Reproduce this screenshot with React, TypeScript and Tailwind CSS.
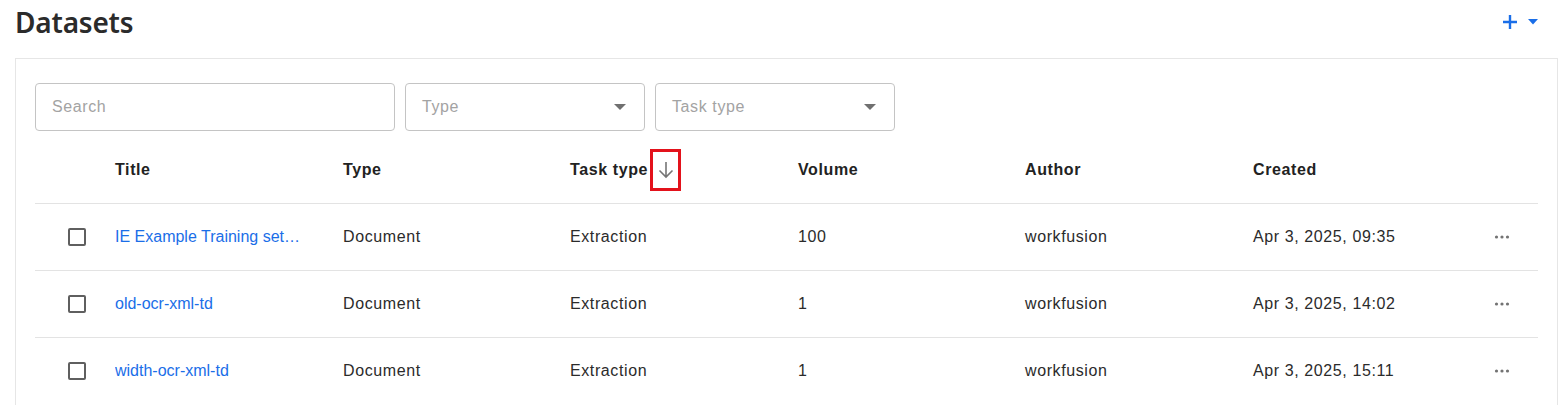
import React from "react";

type Dataset = {
  id: number;
  title: string;
  type: string;
  taskType: string;
  volume: number;
  author: string;
  created: string;
};

const datasets: Dataset[] = [
  {
    id: 1,
    title: "IE Example Training set_copy",
    type: "Document",
    taskType: "Extraction",
    volume: 100,
    author: "workfusion",
    created: "Apr 3, 2025, 09:35",
  },
  {
    id: 2,
    title: "old-ocr-xml-td",
    type: "Document",
    taskType: "Extraction",
    volume: 1,
    author: "workfusion",
    created: "Apr 3, 2025, 14:02",
  },
  {
    id: 3,
    title: "width-ocr-xml-td",
    type: "Document",
    taskType: "Extraction",
    volume: 1,
    author: "workfusion",
    created: "Apr 3, 2025, 15:11",
  },
];

const cols =
  "grid grid-cols-[80px_228px_227px_228px_227px_228px_227px_58px] items-center";

const Caret = ({ className }: { className?: string }) => (
  <svg width="12" height="6" viewBox="0 0 12 6" className={className}>
    <path d="M0 0h12L6 6z" fill="currentColor" />
  </svg>
);

const SelectBox = ({ label }: { label: string }) => (
  <div className="w-[240px] h-[48px] border border-[#c4c4c4] rounded-[4px] flex items-center justify-between pl-[16px] pr-[18px] text-[16px] text-[#a3a3a3]">
    <span>{label}</span>
    <Caret className="text-[#707070]" />
  </div>
);

const SortArrow = () => (
  <span className="ml-[2px] w-[31px] h-[42px] border-[3px] border-[#e3121b] flex items-center justify-center">
    <svg width="16" height="18" viewBox="0 0 16 18" fill="none">
      <path
        d="M8 1v15M1.5 9.5 8 16l6.5-6.5"
        stroke="#757575"
        strokeWidth="1.6"
      />
    </svg>
  </span>
);

const Dots = () => (
  <svg width="16" height="4" viewBox="0 0 16 4">
    <circle cx="2.5" cy="2" r="1.6" fill="#737373" />
    <circle cx="8" cy="2" r="1.6" fill="#737373" />
    <circle cx="13.5" cy="2" r="1.6" fill="#737373" />
  </svg>
);

const App = () => {
  return (
    <div className="bg-white w-[1567px] h-[405px] overflow-hidden font-['Liberation_Sans',Arial,sans-serif] tracking-[0.6px]">
      <div className="flex items-center justify-between pl-[15px] pr-[29px] h-[44px]">
        <h1 className="font-['Noto_Sans',sans-serif] font-semibold text-[28px] leading-none text-[#2b2b2b] tracking-[-0.2px]">
          Datasets
        </h1>
        <div className="flex items-center gap-[10px] text-[#1a6ee8]">
          <svg width="16" height="16" viewBox="0 0 16 16">
            <path d="M8 1v14M1 8h14" stroke="currentColor" strokeWidth="2.4" />
          </svg>
          <svg width="10" height="6" viewBox="0 0 10 6">
            <path d="M0 0h10L5 5.5z" fill="currentColor" />
          </svg>
        </div>
      </div>

      <div className="mt-[14px] ml-[15px] mr-[9px] border border-[#e6e6e6] pt-[24px] pl-[19px] pr-[19px]">
        <div className="flex gap-[10px]">
          <input
            placeholder="Search"
            className="w-[360px] h-[48px] border border-[#c4c4c4] rounded-[4px] px-[16px] text-[16px] outline-none placeholder:text-[#a3a3a3]"
          />
          <SelectBox label="Type" />
          <SelectBox label="Task type" />
        </div>

        <div className="mt-[6px]">
          <div
            className={`${cols} h-[67px] border-b border-[#e3e3e3] text-[16px] font-bold text-[#222]`}
          >
            <div />
            <div>Title</div>
            <div>Type</div>
            <div className="flex items-center">
              Task type
              <SortArrow />
            </div>
            <div>Volume</div>
            <div>Author</div>
            <div>Created</div>
            <div />
          </div>

          {datasets.map((d) => (
            <div
              key={d.id}
              className={`${cols} h-[67px] border-b border-[#e3e3e3] last:border-transparent text-[16px] text-[#2b2b2b]`}
            >
              <div className="flex justify-center pl-[4px]">
                <span className="w-[18px] h-[18px] border-2 border-[#5f5f5f] rounded-[2px]" />
              </div>
              <div className="pr-[38px] truncate tracking-normal text-[#1a6ee8]">
                {d.title}
              </div>
              <div>{d.type}</div>
              <div>{d.taskType}</div>
              <div>{d.volume}</div>
              <div>{d.author}</div>
              <div>{d.created}</div>
              <div className="flex items-center pl-[14px]">
                <Dots />
              </div>
            </div>
          ))}
        </div>
      </div>
    </div>
  );
};

export default App;
